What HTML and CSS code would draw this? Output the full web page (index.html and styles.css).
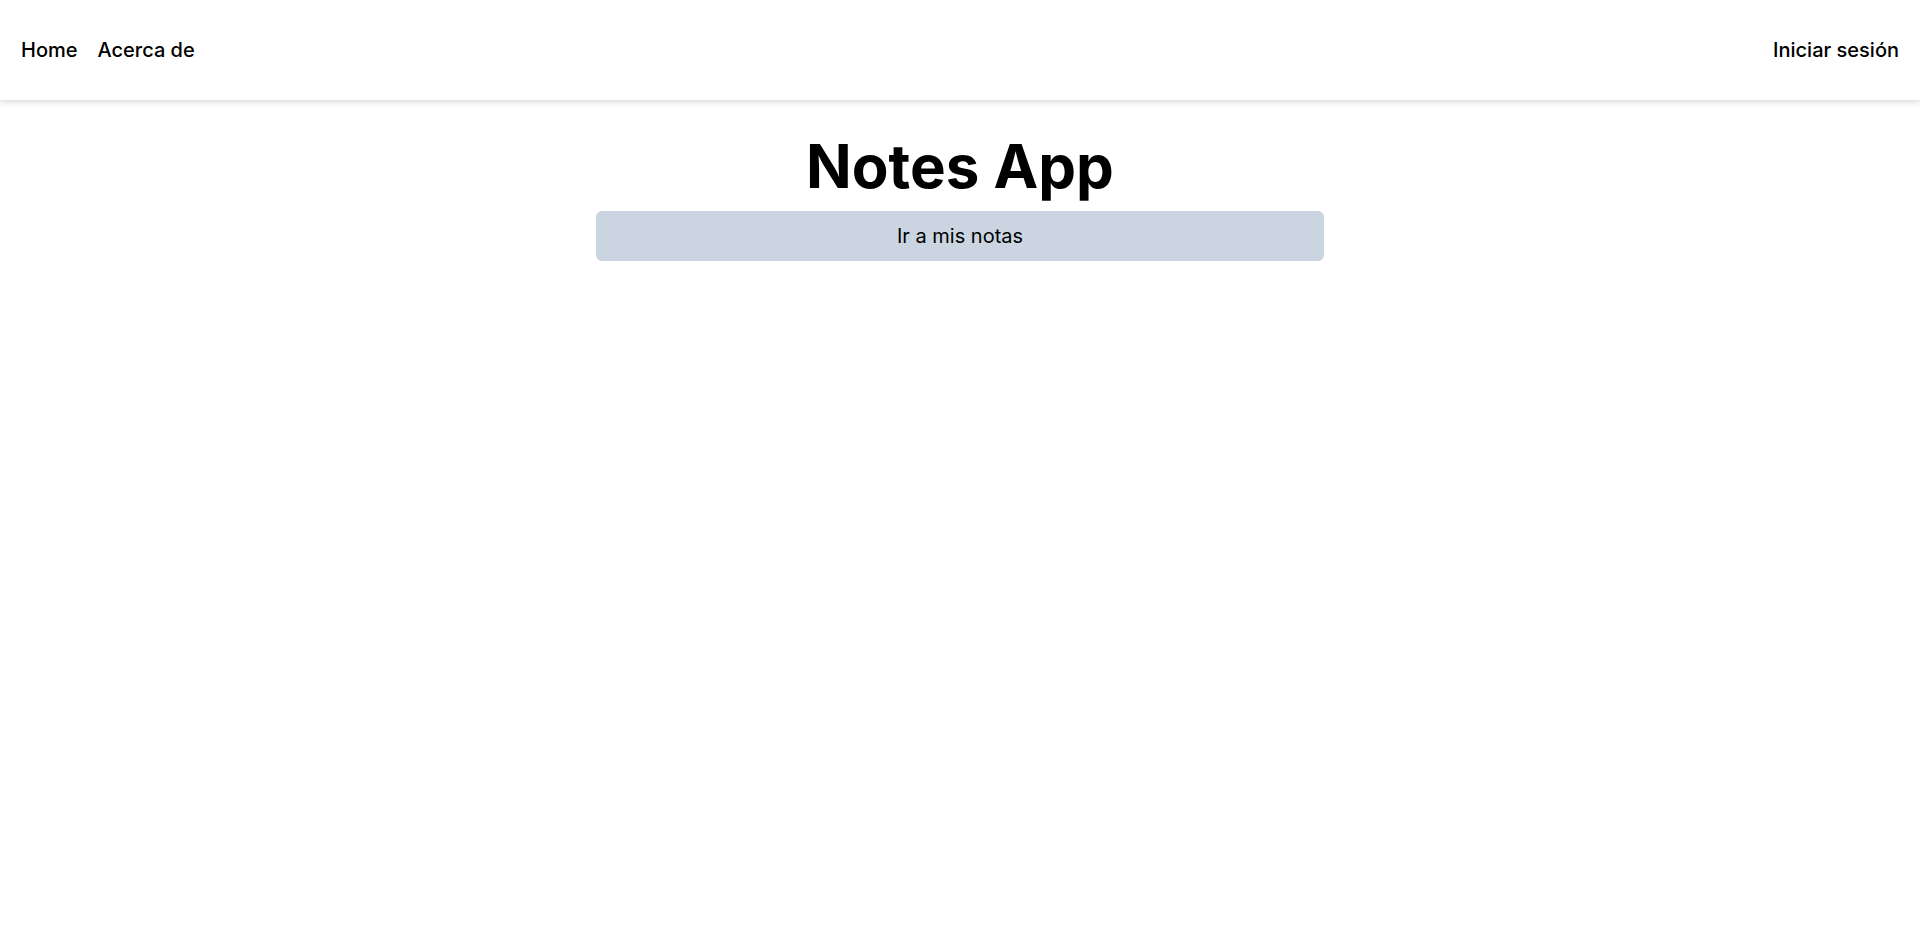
FILE: index.html
```html
<!DOCTYPE html>
<html lang="es">
<head>
    <meta charset="UTF-8">
    <meta name="viewport" content="width=device-width, initial-scale=1.0">
    <title>Notes App</title>
    <link rel="stylesheet" href="styles.css">
</head>
<body>

    <!-- Navbar -->
    <nav class="navbar">
        <div class="nav-links">
            <a href="#" class="nav-link">Home</a>
            <a href="#" class="nav-link">Acerca de</a>
        </div>
        <a href="#" class="nav-link">Iniciar sesión</a>
    </nav>

    <!-- Main -->
    <main class="home">
        <h1 class="home-title">Notes App</h1>
        <a href="#" class="home-button">Ir a mis notas</a>
    </main>

</body>
</html>
```

FILE: styles.css
```css
body {
    margin: 0;
    font-family: Inter, "Noto Sans", sans-serif;
    background-color: #fff;
    color: #000;
}
a {
    color: inherit;
    text-decoration: none;
}
/* Navbar */
.navbar {
    height: 100px;
    padding: 0 21px;
    display: flex;
    align-items: center;
    justify-content: space-between;
    background-color: #fff;
    box-shadow: 0 2px 6px rgba(0, 0, 0, 0.15);
}
.nav-links {
    display: flex;
    gap: 20px;
}
.nav-link {
    font-size: 20px;
    font-weight: 500;
}
/* Home */
.home {
    display: flex;
    flex-direction: column;
    align-items: center;
    padding-top: 36px;
}
.home-title {
    margin: 0 0 15px;
    font-size: 60px;
    line-height: 1;
    font-weight: 700;
}
.home-button {
    width: 728px;
    padding: 10px 0;
    text-align: center;
    font-size: 20px;
    line-height: 30px;
    background-color: #cbd5e1;
    border-radius: 6px;
}
```
